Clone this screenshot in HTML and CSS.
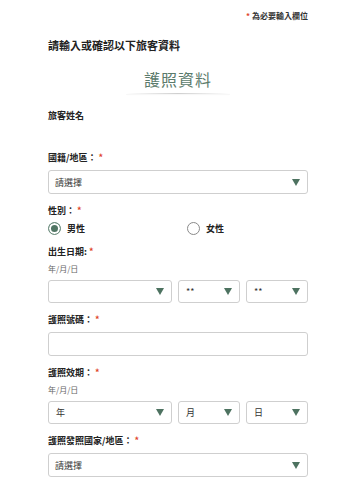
FILE: index.html
```html
<!DOCTYPE html>
<html lang="zh-Hant">
<head>
    <meta charset="UTF-8">
    <meta name="viewport" content="width=device-width, initial-scale=1.0">
    <title>護照資料</title>
    <link rel="stylesheet" href="styles.css">
</head>
<body>

<div class="page">
    <p class="required-note"><span class="star">*</span> 為必要輸入欄位</p>
    <h1 class="form-title">請輸入或確認以下旅客資料</h1>

    <h2 class="section-title">護照資料</h2>
    <div class="section-line"></div>

    <div class="name-row">旅客姓名</div>

    <div class="field">
        <div class="label">國籍/地區： <span class="star">*</span></div>
        <div class="select"><span>請選擇</span><span class="arrow"></span></div>
    </div>

    <div class="field">
        <div class="label">性別： <span class="star">*</span></div>
        <div class="radio-row">
            <label class="radio checked"><span class="dot"></span>男性</label>
            <label class="radio"><span class="dot"></span>女性</label>
        </div>
    </div>

    <div class="field">
        <div class="label">出生日期: <span class="star">*</span></div>
        <div class="hint">年/月/日</div>
        <div class="date-row">
            <div class="select"><span></span><span class="arrow"></span></div>
            <div class="select"><span>**</span><span class="arrow"></span></div>
            <div class="select"><span>**</span><span class="arrow"></span></div>
        </div>
    </div>

    <div class="field">
        <div class="label">護照號碼： <span class="star">*</span></div>
        <div class="text-input"></div>
    </div>

    <div class="field">
        <div class="label">護照效期： <span class="star">*</span></div>
        <div class="hint">年/月/日</div>
        <div class="date-row">
            <div class="select"><span>年</span><span class="arrow"></span></div>
            <div class="select"><span>月</span><span class="arrow"></span></div>
            <div class="select"><span>日</span><span class="arrow"></span></div>
        </div>
    </div>

    <div class="field">
        <div class="label">護照發照國家/地區： <span class="star">*</span></div>
        <div class="select"><span>請選擇</span><span class="arrow"></span></div>
    </div>
</div>

</body>
</html>
```

FILE: styles.css
```css
/* Basic reset */
* {
    margin: 0;
    padding: 0;
    box-sizing: border-box;
}

body {
    font-family: 'Noto Sans CJK TC', 'Noto Sans', sans-serif;
    background-color: #fff;
    color: #222;
}

.page {
    padding: 10px 31px 0 48px;
}

.star {
    color: #e0452a;
}

/* Top notes */
.required-note {
    font-size: 8px;
    line-height: 12px;
    font-weight: bold;
    text-align: right;
    color: #333;
}

.form-title {
    margin-top: 16px;
    font-size: 11px;
    line-height: 14px;
    font-weight: bold;
    color: #222;
}

/* Section heading */
.section-title {
    margin-top: 17px;
    font-size: 16px;
    line-height: 20px;
    font-weight: normal;
    text-align: center;
    color: #5b7b6c;
    letter-spacing: 1px;
}

.section-line {
    width: 104px;
    height: 1px;
    margin: 4px auto 0;
    background: linear-gradient(to right, rgba(200,200,200,0), #cfcfcf 50%, rgba(200,200,200,0));
    box-shadow: 0 1px 1px rgba(0,0,0,0.04);
}

.name-row {
    margin-top: 16px;
    margin-bottom: 30px;
    font-size: 9px;
    line-height: 12px;
    font-weight: bold;
}

/* Form fields */
.field {
    margin-bottom: 11px;
}

.label {
    font-size: 9px;
    line-height: 12px;
    font-weight: bold;
    margin-bottom: 6px;
}

.hint {
    font-size: 8px;
    line-height: 12px;
    color: #666;
    margin-top: -1px;
    margin-bottom: 5px;
}

.select,
.text-input {
    height: 24px;
    border: 1px solid #cfcfcf;
    border-radius: 3px;
    background-color: #fff;
}

.select {
    display: flex;
    align-items: center;
    justify-content: space-between;
    padding: 0 7px 0 6px;
    font-size: 9px;
    color: #333;
}

.arrow {
    width: 0;
    height: 0;
    border-left: 4px solid transparent;
    border-right: 4px solid transparent;
    border-top: 7px solid #4d7260;
}

/* Date selects */
.date-row {
    display: grid;
    grid-template-columns: 2fr 1fr 1fr;
    gap: 6px;
}

.date-row .select {
    height: 23px;
    padding-left: 7px;
}

/* Radios */
.radio-row {
    display: grid;
    grid-template-columns: 139px 1fr;
    margin-top: -2px;
    height: 14px;
}

.radio {
    display: flex;
    align-items: center;
    font-size: 9px;
    font-weight: bold;
}

.radio .dot {
    width: 13px;
    height: 13px;
    border: 1px solid #8a8a8a;
    border-radius: 50%;
    margin-right: 6px;
}

.radio.checked .dot {
    border: 1.5px solid #6f8f80;
    background-color: #507563;
    box-shadow: inset 0 0 0 2px #fff;
}
```
